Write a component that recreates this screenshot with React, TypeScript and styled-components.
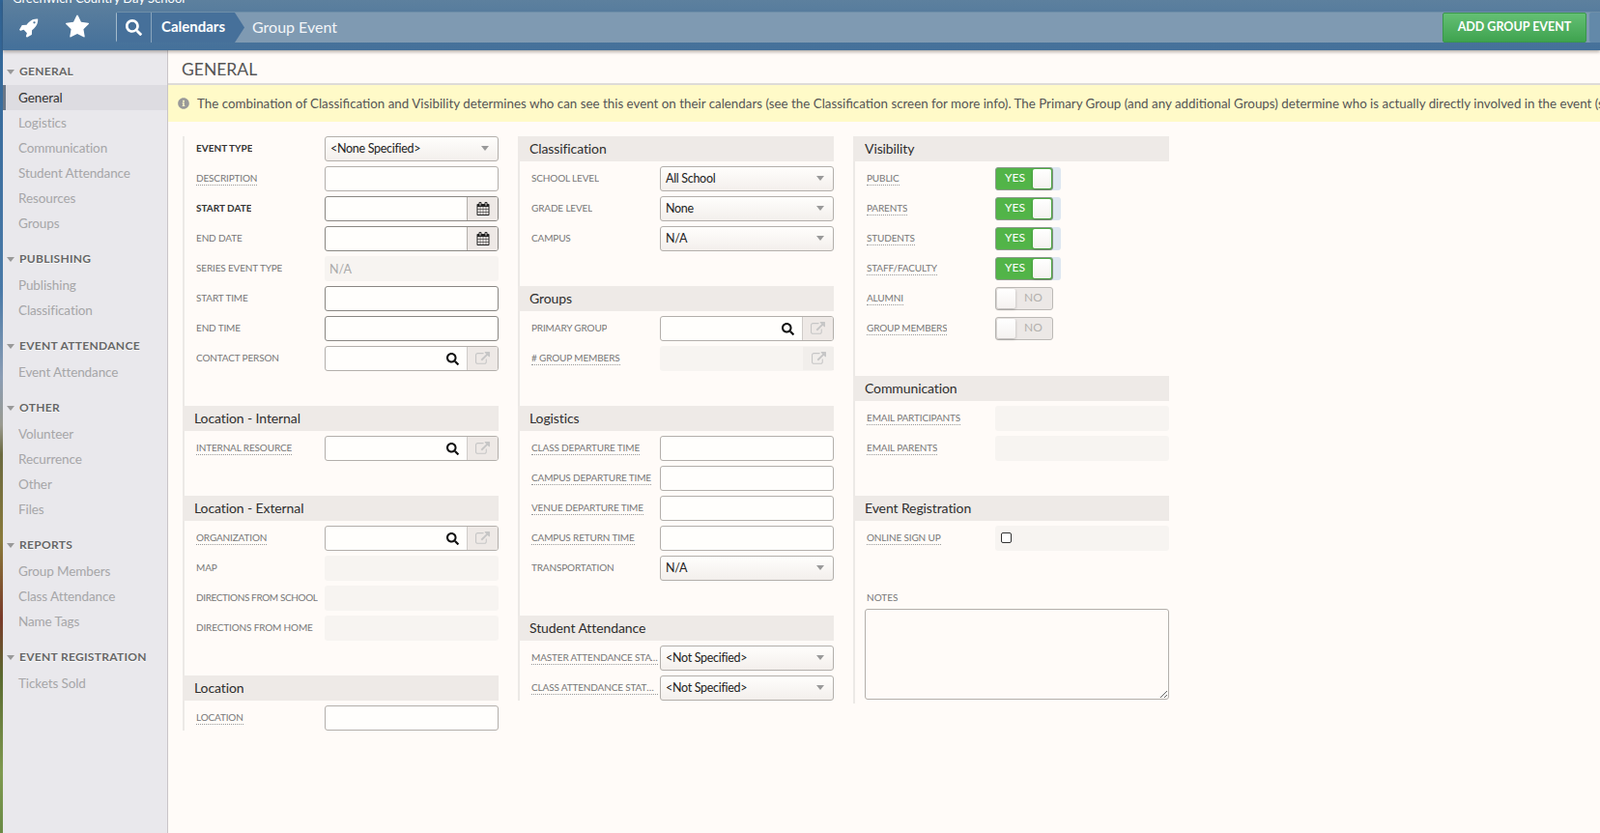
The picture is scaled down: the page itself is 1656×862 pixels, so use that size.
import React from 'react';
import styled, { createGlobalStyle } from 'styled-components';
import { FaSearch, FaInfoCircle } from 'react-icons/fa';

const GlobalStyle = createGlobalStyle`
  html, body {
    margin: 0;
    height: 100%;
    overflow: hidden;
  }
  body {
    font-family: Lato, "Noto Sans", sans-serif;
    background: #fffbf8;
  }
  * { box-sizing: border-box; }
`;

const Page = styled.div`
  display: flex;
  height: 100vh;
  overflow: hidden;
`;

const PhotoStrip = styled.div`
  flex: 0 0 3px;
  background: linear-gradient(
    180deg,
    #2f6496 0,
    #4a7aa8 300px,
    #8b9db4 390px,
    #9a9a90 440px,
    #6b6a40 470px,
    #8a7a3a 560px,
    #7a3a2a 640px,
    #5a6a30 700px,
    #7f9a50 800px,
    #6a8a45 862px
  );
`;

const Main = styled.div`
  flex: 1;
  min-width: 0;
  display: flex;
  flex-direction: column;
`;

const TopBar = styled.header`
  flex: 0 0 52px;
  background: linear-gradient(180deg, #5d809e 0, #44709a 100%);
  box-shadow: 0 2px 3px rgba(60, 50, 40, 0.35);
  position: relative;
  z-index: 2;
`;

const SchoolStrip = styled.div`
  height: 12px;
  overflow: hidden;
  padding-left: 10px;
  color: #fff;
  font-size: 13px;
  line-height: 14px;
`;

const SchoolName = styled.div`
  margin-top: -9px;
`;

const NavRow = styled.div`
  display: flex;
  height: 32px;
`;

const QuickLink = styled.a<{ $width: number }>`
  flex: 0 0 ${props => props.$width}px;
  display: flex;
  align-items: center;
  justify-content: center;
  color: #fff;
`;

const Crumbs = styled.div`
  flex: 1;
  display: flex;
  align-items: stretch;
  margin-left: 15px;
  background: #7f9ab2;
  border-top: 1px solid #6f8fa9;
  border-left: 1px solid #a4bacb;
  border-radius: 3px 0 0 3px;
`;

const CrumbSearch = styled.div`
  flex: 0 0 36px;
  display: flex;
  align-items: center;
  justify-content: center;
  background: #46709a;
  border-right: 1px solid #8aa5bd;
  color: #fff;
`;

const CrumbParent = styled.div`
  flex: 0 0 96px;
  display: flex;
  align-items: center;
  padding: 0 0 3px 10px;
  background: #46709a;
  clip-path: polygon(0 0, 86px 0, 96px 50%, 86px 100%, 0 100%);
  color: #fff;
  font-size: 15px;
  font-weight: 700;
`;

const CrumbCurrent = styled.div`
  flex: 1;
  display: flex;
  align-items: center;
  padding: 0 0 2px 8px;
  color: #f2f5f8;
  font-size: 16px;
`;

const AddButton = styled.button`
  align-self: center;
  width: 149px;
  height: 31px;
  margin: 0 3px 0 0;
  padding: 0 0 3px;
  background: linear-gradient(180deg, #64bf74 0, #3fa34f 100%);
  border: 1px solid #38974a;
  border-radius: 2px;
  color: #fff;
  font-family: inherit;
  font-size: 12.5px;
  font-weight: 700;
`;

const GhostButton = styled.div`
  align-self: center;
  width: 11px;
  height: 31px;
  background: #6389a9;
  border-radius: 2px 0 0 2px;
`;

const Body = styled.div`
  flex: 1;
  min-height: 0;
  display: flex;
`;

const Sidebar = styled.nav`
  flex: 0 0 171px;
  padding-top: 8px;
  background: #e9e8ec;
  border-right: 1px solid #c9c5c8;
`;

const NavGroup = styled.div`
  margin-bottom: 10px;
`;

const NavHeading = styled.div`
  display: flex;
  align-items: center;
  height: 28px;
  padding: 0 0 1px 4px;
  gap: 5px;
  color: #666;
  font-size: 12px;
  font-weight: 700;
  letter-spacing: 0.3px;
  text-shadow: 0 1px 0 #fff;
`;

const NavCaret = styled.span`
  width: 0;
  height: 0;
  margin-top: 1px;
  border-left: 4.5px solid transparent;
  border-right: 4.5px solid transparent;
  border-top: 5px solid #999;
`;

const NavItem = styled.a<{ $active?: boolean }>`
  display: flex;
  align-items: center;
  height: 26px;
  padding-left: ${props => (props.$active ? '13px' : '16px')};
  border-left: ${props => (props.$active ? '3px solid #6b7787' : 'none')};
  background: ${props => (props.$active ? '#dddce1' : 'transparent')};
  color: ${props => (props.$active ? '#333' : '#a6a6a8')};
  font-size: 13.5px;
  letter-spacing: -0.1px;
`;

const Content = styled.main`
  flex: 1;
  min-width: 0;
  overflow: hidden;
`;

const TitleBar = styled.h1`
  height: 36px;
  margin: 0;
  padding: 0 14px;
  border-bottom: 2px solid #dedbd8;
  color: #555;
  font-size: 17.5px;
  font-weight: 400;
  line-height: 39px;
`;

const Notice = styled.div`
  display: flex;
  align-items: center;
  height: 38px;
  padding-left: 10px;
  gap: 8px;
  background: #fffac8;
  color: #555;
  font-size: 13.35px;
  white-space: nowrap;
  overflow: hidden;
`;

const NoticeIcon = styled(FaInfoCircle)`
  flex: none;
  color: #999;
  font-size: 12px;
`;

const FormGrid = styled.div`
  display: flex;
  align-items: flex-start;
  gap: 20px;
  padding: 15px 0 0 15px;
`;

const Column = styled.div`
  flex: 0 0 327px;
  border-left: 2px solid #ece9e6;
`;

const Section = styled.section`
  padding-bottom: 31px;
  &:last-child { padding-bottom: 0; }
`;

const SectionHead = styled.h2`
  height: 26px;
  margin: 0 0 5px -2px;
  padding-left: 12px;
  background: #eeeae7;
  color: #2e2e2e;
  font-size: 14px;
  font-weight: 400;
  letter-spacing: -0.1px;
  line-height: 26px;
`;

const Row = styled.div`
  display: flex;
  align-items: center;
  height: 26px;
  margin-bottom: 5px;
  ${Section}:last-child &:last-child { margin-bottom: 0; }
`;

const LabelCell = styled.div`
  flex: 0 0 145px;
  padding: 0 0 5px 12px;
`;

const Label = styled.span<{ $dotted?: boolean; $required?: boolean; $tight?: boolean }>`
  display: inline-block;
  max-width: 131px;
  overflow: hidden;
  text-overflow: ellipsis;
  white-space: nowrap;
  vertical-align: middle;
  color: ${props => (props.$required ? '#333' : '#777')};
  font-size: 10px;
  font-weight: ${props => (props.$required ? 700 : 400)};
  letter-spacing: ${props => (props.$required ? '0' : props.$tight ? '-0.38px' : '-0.15px')};
  line-height: 14px;
  border-bottom: ${props => (props.$dotted ? '1px dotted #999' : '1px solid transparent')};
`;

const TextInput = styled.input<{ $strong?: boolean }>`
  display: block;
  width: 180px;
  height: 26px;
  padding: 0 5px;
  background: #fffefc;
  border: 1px solid ${props => (props.$strong ? '#8a8783' : '#b3afab')};
  border-radius: 3px;
`;

const InputGroup = styled.div<{ $strong?: boolean }>`
  display: flex;
  width: 180px;
  height: 26px;
  background: #fffefc;
  border: 1px solid ${props => (props.$strong ? '#8a8783' : '#b3afab')};
  border-radius: 3px;
  overflow: hidden;
`;

const GroupField = styled.input`
  flex: 1;
  min-width: 0;
  padding: 0 5px;
  background: transparent;
  border: 0;
`;

const SearchSlot = styled.span`
  flex: none;
  display: flex;
  align-items: center;
  padding-right: 8px;
  color: #111;
  font-size: 13px;
`;

const Addon = styled.span<{ $muted?: boolean }>`
  flex: 0 0 32px;
  display: flex;
  align-items: center;
  justify-content: center;
  background: #eee9e6;
  border-left: 1px solid ${props => (props.$muted ? '#cfcbc8' : '#b3afab')};
  color: ${props => (props.$muted ? '#c6c6c6' : '#222')};
`;

const AddonGhost = styled(Addon)`
  margin-left: auto;
  height: 24px;
  border-left: 0;
  background: #f1eeeb;
`;

const SelectBox = styled.button`
  display: flex;
  align-items: center;
  justify-content: space-between;
  width: 180px;
  height: 26px;
  padding: 0 9px 1px 5px;
  background: linear-gradient(180deg, #fffefc 0, #f3efec 100%);
  border: 1px solid #b3afab;
  border-radius: 3px;
  color: #222;
  font-family: inherit;
  font-size: 12.5px;
  letter-spacing: -0.3px;
`;

const SelectCaret = styled.span`
  width: 0;
  height: 0;
  border-left: 4px solid transparent;
  border-right: 4px solid transparent;
  border-top: 5px solid #999;
`;

const ReadOnly = styled.div`
  display: flex;
  align-items: center;
  width: 180px;
  height: 26px;
  padding: 0 5px;
  background: #f7f4f1;
  border-radius: 3px;
  color: #aaa;
  font-size: 12.5px;
`;

const ReadOnlyGroup = styled(ReadOnly)`
  padding: 0;
`;

const CheckCell = styled(ReadOnly)`
  padding: 0 0 2px 6px;
`;

const CheckMark = styled.span`
  width: 11px;
  height: 11px;
  border: 1px solid #333;
  border-radius: 2px;
  background: #fff;
`;

const ToggleTrack = styled.div<{ $on?: boolean }>`
  width: ${props => (props.$on ? '68px' : '60px')};
  height: 24px;
  background: ${props => (props.$on ? '#dde6f0' : 'transparent')};
  border-radius: 3px;
`;

const ToggleBody = styled.div<{ $on?: boolean }>`
  display: flex;
  flex-direction: ${props => (props.$on ? 'row' : 'row-reverse')};
  align-items: center;
  justify-content: space-between;
  width: 60px;
  height: 24px;
  padding: 1px;
  background: ${props => (props.$on ? '#52b448' : '#ece8e6')};
  border: 1px solid ${props => (props.$on ? '#8d9a8b' : '#bcb9b6')};
  border-radius: 3px;
`;

const ToggleText = styled.span<{ $on?: boolean }>`
  flex: 1;
  padding-bottom: 4px;
  text-align: center;
  color: ${props => (props.$on ? '#fff' : '#b3b0ad')};
  font-size: 12px;
`;

const ToggleKnob = styled.span`
  flex: 0 0 19px;
  height: 20px;
  background: linear-gradient(180deg, #ffffff 0, #f5f2f0 100%);
  border-radius: 2px;
  box-shadow: 0 1px 3px rgba(0, 0, 0, 0.25);
`;

const NotesLabel = styled.div`
  height: 24px;
  padding: 5px 0 0 12px;
  color: #777;
  font-size: 10px;
  line-height: 14px;
`;

const NotesArea = styled.textarea`
  display: block;
  width: 315px;
  height: 94px;
  margin: 0 0 4px 10px;
  background: #fffbf8;
  border: 1px solid #b3afab;
  border-radius: 3px;
`;

const RocketIcon = () => (
  <svg width="21" height="21" viewBox="0 0 1792 1792" fill="currentColor">
    <path d="M1504 448q0-40-28-68t-68-28-68 28-28 68 28 68 68 28 68-28 28-68zm224-288q0 249-75.500 430.500t-253.500 360.500q-81 80-195 176l-20 379q-2 16-16 26l-384 224q-7 4-16 4-12 0-23-9l-64-64q-13-14-8-32l85-276-281-281-276 85q-3 1-9 1-14 0-23-9l-64-64q-17-19-5-39l224-384q10-14 26-16l379-20q96-114 176-195 188-187 358-258t431-71q14 0 23 9t9 23z" />
  </svg>
);

const StarIcon = () => (
  <svg width="26" height="26" viewBox="0 0 1792 1792" fill="currentColor">
    <path d="M1728 647q0 22-26 48l-363 354 86 500q1 7 1 20 0 21-10.500 35.500t-30.500 14.500q-19 0-40-12l-449-236-449 236q-22 12-40 12-21 0-31.500-14.500t-10.500-35.500q0-6 2-20l86-500-364-354q-25-27-25-48 0-37 56-46l502-73 225-455q19-41 49-41t49 41l225 455 502 73q56 9 56 46z" />
  </svg>
);

const CalendarIcon = () => (
  <svg width="14" height="14" viewBox="0 0 1792 1792" fill="#222">
    <path d="M192 1664h288v-288h-288v288zm352 0h320v-288h-320v288zm-352-352h288v-320h-288v320zm352 0h320v-320h-320v320zm-352-384h288v-288h-288v288zm736 736h320v-288h-320v288zm-384-736h320v-288h-320v288zm768 736h288v-288h-288v288zm-384-352h320v-320h-320v320zm-352-864v-288q0-13-9.500-22.500t-22.500-9.500h-64q-13 0-22.500 9.500t-9.500 22.500v288q0 13 9.500 22.500t22.500 9.500h64q13 0 22.500-9.500t9.500-22.500zm736 864h288v-320h-288v320zm-384-384h320v-288h-320v288zm384 0h288v-288h-288v288zm32-480v-288q0-13-9.500-22.500t-22.500-9.500h-64q-13 0-22.500 9.500t-9.500 22.500v288q0 13 9.500 22.500t22.500 9.500h64q13 0 22.500-9.500t9.500-22.500zm384-64v1280q0 52-38 90t-90 38h-1408q-52 0-90-38t-38-90v-1280q0-52 38-90t90-38h128v-96q0-66 47-113t113-47h64q66 0 113 47t47 113v96h384v-96q0-66 47-113t113-47h64q66 0 113 47t47 113v96h128q52 0 90 38t38 90z" />
  </svg>
);

const LinkIcon = () => (
  <svg width="15" height="15" viewBox="0 0 1792 1792" fill="currentColor">
    <path d="M1408 928v320q0 119-84.500 203.500t-203.500 84.500h-832q-119 0-203.500-84.500t-84.500-203.500v-832q0-119 84.500-203.500t203.500-84.500h704q14 0 23 9t9 23v64q0 14-9 23t-23 9h-704q-66 0-113 47t-47 113v832q0 66 47 113t113 47h832q66 0 113-47t47-113v-320q0-14 9-23t23-9h64q14 0 23 9t9 23zm384-864v512q0 26-19 45t-45 19-45-19l-176-176-652 652q-10 10-23 10t-23-10l-114-114q-10-10-10-23t10-23l652-652-176-176q-19-19-19-45t19-45 45-19h512q26 0 45 19t19 45z" />
  </svg>
);

const navGroups = [
  { title: 'GENERAL', items: ['General', 'Logistics', 'Communication', 'Student Attendance', 'Resources', 'Groups'] },
  { title: 'PUBLISHING', items: ['Publishing', 'Classification'] },
  { title: 'EVENT ATTENDANCE', items: ['Event Attendance'] },
  { title: 'OTHER', items: ['Volunteer', 'Recurrence', 'Other', 'Files'] },
  { title: 'REPORTS', items: ['Group Members', 'Class Attendance', 'Name Tags'] },
  { title: 'EVENT REGISTRATION', items: ['Tickets Sold'] },
];

type LabelProps = { text: string; dotted?: boolean; required?: boolean; tight?: boolean };

function FieldLabel({ text, dotted, required, tight }: LabelProps) {
  return (
    <LabelCell>
      <Label $dotted={dotted} $required={required} $tight={tight}>
        {text}
      </Label>
    </LabelCell>
  );
}

function TextRow({ strong, ...label }: LabelProps & { strong?: boolean }) {
  return (
    <Row>
      <FieldLabel {...label} />
      <TextInput $strong={strong} />
    </Row>
  );
}

function SelectRow({ value, ...label }: LabelProps & { value: string }) {
  return (
    <Row>
      <FieldLabel {...label} />
      <SelectBox>
        {value}
        <SelectCaret />
      </SelectBox>
    </Row>
  );
}

function DateRow(label: LabelProps) {
  return (
    <Row>
      <FieldLabel {...label} />
      <InputGroup $strong>
        <GroupField />
        <Addon>
          <CalendarIcon />
        </Addon>
      </InputGroup>
    </Row>
  );
}

function LookupRow(label: LabelProps) {
  return (
    <Row>
      <FieldLabel {...label} />
      <InputGroup>
        <GroupField />
        <SearchSlot>
          <FaSearch />
        </SearchSlot>
        <Addon $muted>
          <LinkIcon />
        </Addon>
      </InputGroup>
    </Row>
  );
}

function ReadOnlyRow({ value, ...label }: LabelProps & { value?: string }) {
  return (
    <Row>
      <FieldLabel {...label} />
      <ReadOnly>{value}</ReadOnly>
    </Row>
  );
}

function ToggleRow({ on, ...label }: LabelProps & { on?: boolean }) {
  return (
    <Row>
      <FieldLabel {...label} />
      <ToggleTrack $on={on}>
        <ToggleBody $on={on}>
          <ToggleText $on={on}>{on ? 'YES' : 'NO'}</ToggleText>
          <ToggleKnob />
        </ToggleBody>
      </ToggleTrack>
    </Row>
  );
}

export default function App() {
  return (
    <Page>
      <GlobalStyle />
      <PhotoStrip />
      <Main>
        <TopBar>
          <SchoolStrip>
            <SchoolName>Greenwich Country Day School</SchoolName>
          </SchoolStrip>
          <NavRow>
            <QuickLink $width={52}>
              <RocketIcon />
            </QuickLink>
            <QuickLink $width={50}>
              <StarIcon />
            </QuickLink>
            <Crumbs>
              <CrumbSearch>
                <FaSearch size={17} />
              </CrumbSearch>
              <CrumbParent>Calendars</CrumbParent>
              <CrumbCurrent>Group Event</CrumbCurrent>
              <AddButton>ADD GROUP EVENT</AddButton>
              <GhostButton />
            </Crumbs>
          </NavRow>
        </TopBar>
        <Body>
          <Sidebar>
            {navGroups.map(group => (
              <NavGroup key={group.title}>
                <NavHeading>
                  <NavCaret />
                  {group.title}
                </NavHeading>
                {group.items.map(item => (
                  <NavItem key={item} $active={item === 'General'}>
                    {item}
                  </NavItem>
                ))}
              </NavGroup>
            ))}
          </Sidebar>
          <Content>
            <TitleBar>GENERAL</TitleBar>
            <Notice>
              <NoticeIcon />
              The combination of Classification and Visibility determines who can see this event on their calendars (see the Classification screen for more info). The Primary Group (and any additional Groups) determine who is actually directly involved in the event (s
            </Notice>
            <FormGrid>
              <Column>
                <Section>
                  <SelectRow text="EVENT TYPE" required value="<None Specified>" />
                  <TextRow text="DESCRIPTION" dotted />
                  <DateRow text="START DATE" required />
                  <DateRow text="END DATE" />
                  <ReadOnlyRow text="SERIES EVENT TYPE" value="N/A" />
                  <TextRow text="START TIME" strong />
                  <TextRow text="END TIME" strong />
                  <LookupRow text="CONTACT PERSON" />
                </Section>
                <Section>
                  <SectionHead>Location - Internal</SectionHead>
                  <LookupRow text="INTERNAL RESOURCE" dotted />
                </Section>
                <Section>
                  <SectionHead>Location - External</SectionHead>
                  <LookupRow text="ORGANIZATION" dotted />
                  <ReadOnlyRow text="MAP" />
                  <ReadOnlyRow text="DIRECTIONS FROM SCHOOL" tight />
                  <ReadOnlyRow text="DIRECTIONS FROM HOME" />
                </Section>
                <Section>
                  <SectionHead>Location</SectionHead>
                  <TextRow text="LOCATION" dotted />
                </Section>
              </Column>
              <Column>
                <Section>
                  <SectionHead>Classification</SectionHead>
                  <SelectRow text="SCHOOL LEVEL" value="All School" />
                  <SelectRow text="GRADE LEVEL" value="None" />
                  <SelectRow text="CAMPUS" value="N/A" />
                </Section>
                <Section>
                  <SectionHead>Groups</SectionHead>
                  <LookupRow text="PRIMARY GROUP" />
                  <Row>
                    <FieldLabel text="# GROUP MEMBERS" dotted />
                    <ReadOnlyGroup>
                      <AddonGhost $muted>
                        <LinkIcon />
                      </AddonGhost>
                    </ReadOnlyGroup>
                  </Row>
                </Section>
                <Section>
                  <SectionHead>Logistics</SectionHead>
                  <TextRow text="CLASS DEPARTURE TIME" dotted />
                  <TextRow text="CAMPUS DEPARTURE TIME" dotted />
                  <TextRow text="VENUE DEPARTURE TIME" dotted />
                  <TextRow text="CAMPUS RETURN TIME" dotted />
                  <SelectRow text="TRANSPORTATION" value="N/A" />
                </Section>
                <Section>
                  <SectionHead>Student Attendance</SectionHead>
                  <SelectRow text="MASTER ATTENDANCE STATUS" dotted value="<Not Specified>" />
                  <SelectRow text="CLASS ATTENDANCE STATUS" dotted value="<Not Specified>" />
                </Section>
              </Column>
              <Column>
                <Section>
                  <SectionHead>Visibility</SectionHead>
                  <ToggleRow text="PUBLIC" dotted on />
                  <ToggleRow text="PARENTS" dotted on />
                  <ToggleRow text="STUDENTS" dotted on />
                  <ToggleRow text="STAFF/FACULTY" dotted on />
                  <ToggleRow text="ALUMNI" dotted />
                  <ToggleRow text="GROUP MEMBERS" dotted />
                </Section>
                <Section>
                  <SectionHead>Communication</SectionHead>
                  <ReadOnlyRow text="EMAIL PARTICIPANTS" dotted />
                  <ReadOnlyRow text="EMAIL PARENTS" dotted />
                </Section>
                <Section>
                  <SectionHead>Event Registration</SectionHead>
                  <Row>
                    <FieldLabel text="ONLINE SIGN UP" dotted />
                    <CheckCell>
                      <CheckMark />
                    </CheckCell>
                  </Row>
                </Section>
                <Section>
                  <NotesLabel>NOTES</NotesLabel>
                  <NotesArea />
                </Section>
              </Column>
            </FormGrid>
          </Content>
        </Body>
      </Main>
    </Page>
  );
}
